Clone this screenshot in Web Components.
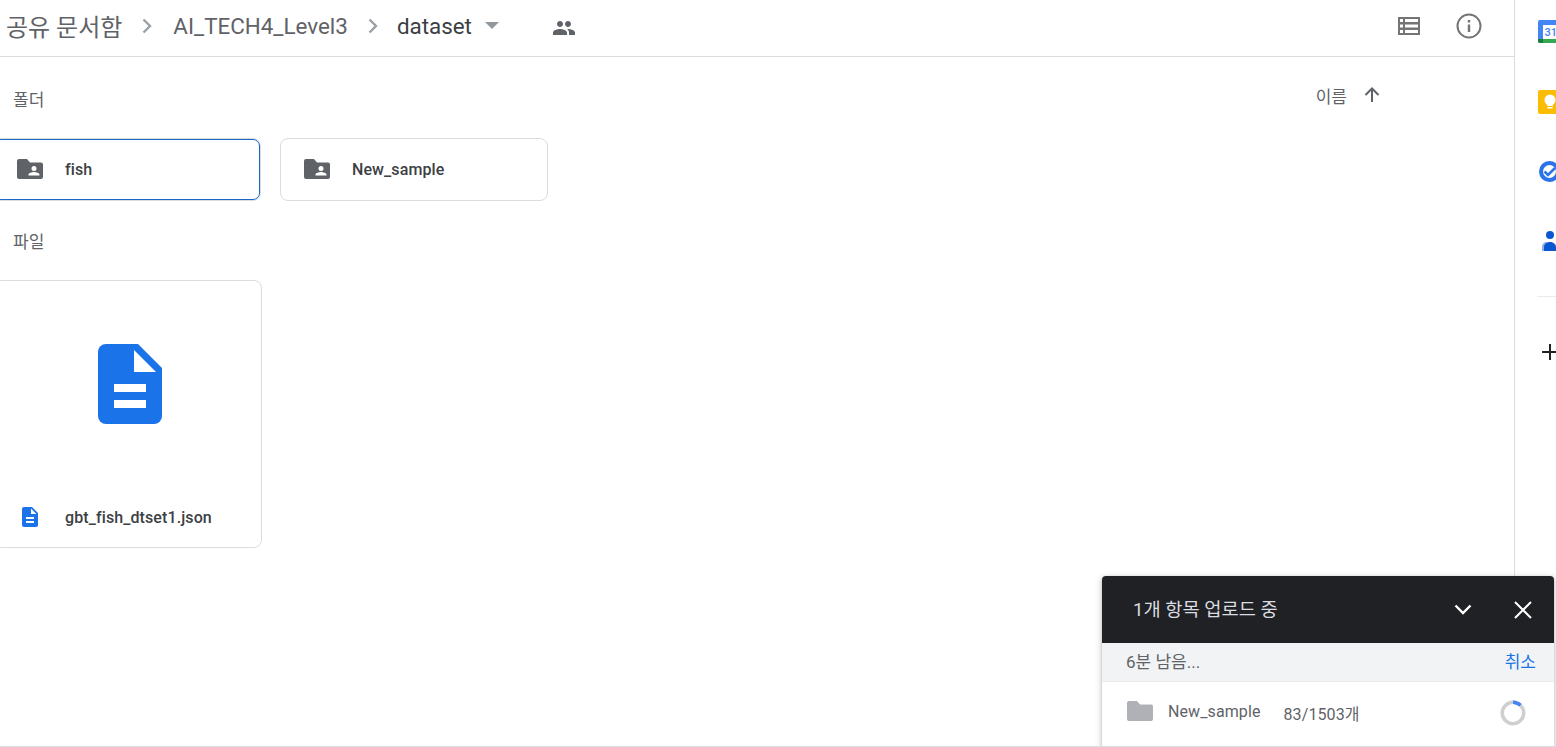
<!DOCTYPE html>
<html lang="ko">
<head>
<meta charset="utf-8">
<title>dataset - Google Drive</title>
<style>
    html, body {
        margin: 0;
        height: 100%;
        overflow: hidden;
        background: #fff;
        font-family: Roboto, "Noto Sans CJK KR", sans-serif;
    }
</style>
</head>
<body>
<drive-app>
    <drive-header></drive-header>
    <drive-section label="폴더" sortable>
        <folder-card name="fish" focused></folder-card>
        <folder-card name="New_sample"></folder-card>
    </drive-section>
    <drive-section label="파일">
        <file-card name="gbt_fish_dtset1.json"></file-card>
    </drive-section>
    <side-rail slot="rail"></side-rail>
    <upload-panel slot="overlay"></upload-panel>
</drive-app>

<script>
const define = (name, html) => {
    const template = document.createElement('template')
    template.innerHTML = html

    window.customElements.define(name, class extends HTMLElement {
        constructor() {
            super()

            this
                .attachShadow({ mode: 'open' })
                .appendChild(template.content.cloneNode(true))
        }

        connectedCallback() {
            this.shadowRoot.querySelectorAll('[data-attr]').forEach(el => {
                el.textContent = this.getAttribute(el.dataset.attr)
            })
        }
    })
}

const docIcon = size => `
    <svg width="${size * 64 / 80}" height="${size}" viewBox="0 0 64 80">
        <path fill="#1a73e8" d="M8 0H40L64 24V72a8 8 0 0 1-8 8H8a8 8 0 0 1-8-8V8a8 8 0 0 1 8-8Z"/>
        <path fill="#fff" d="M36 6V28H58ZM16 40H48V48H16ZM16 56H48V64H16Z"/>
    </svg>
`

define('drive-app', `
    <style>
        :host {
            display: grid;
            grid-template-columns: 1514px 42px;
            height: 746px;
            border-bottom: 1px solid #dadce0;
            position: relative;
            overflow: hidden;
        }

        main {
            min-width: 0;
        }
    </style>
    <main><slot></slot></main>
    <slot name="rail"></slot>
    <slot name="overlay"></slot>
`)

define('drive-header', `
    <style>
        :host {
            display: flex;
            align-items: center;
            box-sizing: content-box;
            height: 51px;
            padding: 0 0 5px 7px;
            border-bottom: 1px solid #dadce0;
            font-size: 22.4px;
            color: #5f6368;
        }

        .ko {
            font-size: 24px;
            margin-left: -1px;
        }

        .chevron {
            margin: 0 21px 0 20px;
        }

        .chevron.last {
            margin: 0 19px 0 20px;
        }

        .current {
            color: #3c4043;
        }

        .caret {
            margin-left: 13px;
            opacity: .85;
        }

        .people {
            margin: 5px 0 0 53px;
        }

        .list {
            margin-left: auto;
        }

        .info {
            margin: 0 32px 0 35px;
        }

        svg {
            display: block;
            flex: none;
        }
    </style>
    <span class="ko">공유 문서함</span>
    <svg class="chevron" width="10" height="16" viewBox="0 0 10 16"><path fill="none" stroke="#9aa0a6" stroke-width="2.4" d="M1.5 1.5 8 8l-6.500 6.500"/></svg>
    <span>AI_TECH4_Level3</span>
    <svg class="chevron last" width="10" height="16" viewBox="0 0 10 16"><path fill="none" stroke="#9aa0a6" stroke-width="2.4" d="M1.5 1.5 8 8l-6.500 6.500"/></svg>
    <span class="current">dataset</span>
    <svg class="caret" width="14" height="7" viewBox="0 0 14 7"><path fill="#80868b" d="M0 0H14L7 7Z"/></svg>
    <svg class="people" width="24" height="24" viewBox="0 0 24 24"><path fill="#5f6368" d="M16 11c1.660 0 2.990-1.340 2.990-3S17.660 5 16 5c-1.660 0-3 1.340-3 3s1.340 3 3 3zm-8 0c1.660 0 2.990-1.340 2.990-3S9.660 5 8 5C6.340 5 5 6.340 5 8s1.340 3 3 3zm0 2c-2.330 0-7 1.170-7 3.500V19h14v-2.500c0-2.330-4.670-3.500-7-3.500zm8 0c-.290 0-.620.020-.970.050 1.160.840 1.970 1.970 1.970 3.450V19h6v-2.500c0-2.330-4.670-3.500-7-3.500z"/></svg>
    <svg class="list" width="24" height="18" viewBox="0 0 24 18"><path fill="#757575" fill-rule="evenodd" d="M1 0H23V18H1ZM3 2V5H6V2ZM8 2V5H21V2ZM3 7.500V10.500H6V7.500ZM8 7.500V10.500H21V7.500ZM3 13V16H6V13ZM8 13V16H21V13Z"/></svg>
    <svg class="info" width="26" height="26" viewBox="0 0 26 26">
        <circle cx="13" cy="13" r="11.500" fill="none" stroke="#757575" stroke-width="2"/>
        <path fill="#757575" d="M11.800 11.500h2.400V19h-2.400zM11.800 7h2.400v2.400h-2.400z"/>
    </svg>
`)

define('drive-section', `
    <style>
        :host {
            display: block;
            margin-left: -7px;
        }

        header {
            display: flex;
            justify-content: space-between;
            align-items: center;
            height: 20px;
            padding: 31px 133px 30px 20px;
            font-size: 17px;
            color: #5f6368;
        }

        :host(:not([sortable])) header {
            padding: 29px 133px 30px 20px;
        }

        :host(:not([sortable])) .sort {
            display: none;
        }

        .sort {
            display: flex;
            align-items: center;
            gap: 16px;
            margin-top: -6px;
        }

        .items {
            display: flex;
            gap: 19px;
        }

        svg {
            display: block;
        }
    </style>
    <header>
        <span data-attr="label"></span>
        <span class="sort">
            <span>이름</span>
            <svg width="18" height="18" viewBox="0 0 18 18"><path fill="none" stroke="#5f6368" stroke-width="2" d="M9 16V2.500M2.500 9 9 2.500 15.500 9"/></svg>
        </span>
    </header>
    <div class="items"><slot></slot></div>
`)

define('folder-card', `
    <style>
        :host {
            display: block;
            box-sizing: border-box;
            width: 268px;
            height: 63px;
            border: 1px solid #dadce0;
            border-radius: 8px;
            font-size: 16px;
            letter-spacing: .1px;
            font-weight: 500;
            color: #3c4043;
        }

        .box {
            display: flex;
            align-items: center;
            box-sizing: border-box;
            height: 100%;
            padding: 0 0 2px 22px;
            border: 1px solid transparent;
            border-radius: 7px;
        }

        :host([focused]) .box {
            border-color: #1967c7;
        }

        span {
            margin-top: 2px;
        }

        svg {
            display: block;
            margin-right: 22px;
        }
    </style>
    <div class="box">
        <svg width="26" height="20" viewBox="0 0 26 20">
            <path fill="#5f6368" fill-rule="evenodd" d="M2 0H10L13 3.500H24a2 2 0 0 1 2 2V18a2 2 0 0 1-2 2H2a2 2 0 0 1-2-2V2a2 2 0 0 1 2-2ZM17 7a2.500 2.500 0 1 0 0 5 2.500 2.500 0 0 0 0-5ZM11.500 16.500H22.500V15.500C22.500 14 19 13 17 13S11.500 14 11.500 15.500Z"/>
        </svg>
        <span data-attr="name"></span>
    </div>
`)

define('file-card', `
    <style>
        :host {
            display: flex;
            flex-direction: column;
            box-sizing: border-box;
            width: 268px;
            height: 268px;
            margin-left: 1px;
            border: 1px solid #dadce0;
            border-radius: 8px;
            font-size: 16px;
            letter-spacing: .1px;
            font-weight: 500;
            color: #3c4043;
        }

        .preview {
            display: flex;
            justify-content: center;
            padding: 63px 0 0 4px;
            height: 163px;
        }

        .name {
            display: flex;
            align-items: center;
            gap: 27px;
            padding-left: 27px;
        }

        svg {
            display: block;
        }
    </style>
    <div class="preview">${docIcon(80)}</div>
    <div class="name">${docIcon(20)}<span data-attr="name"></span></div>
`)

define('side-rail', `
    <style>
        :host {
            display: flex;
            flex-direction: column;
            box-sizing: border-box;
            height: 746px;
            padding-top: 20px;
            border-left: 1px solid #dadce0;
            overflow: hidden;
        }

        svg {
            display: block;
            flex: none;
            margin-left: 23px;
        }

        svg + svg {
            margin-top: 46px;
        }

        hr {
            width: 60px;
            margin: 42px 0 46px 22px;
            border: 0;
            border-top: 1px solid #e8eaed;
        }
    </style>
    <svg width="24" height="24" viewBox="0 0 24 24">
        <path fill="#4285f4" d="M2 0H22a2 2 0 0 1 2 2V19H0V2a2 2 0 0 1 2-2Z"/>
        <rect x="5" y="5" width="19" height="14" fill="#fff"/>
        <path fill="#34a853" d="M0 19H24V23H2a2 2 0 0 1-2-2Z"/>
        <path fill="#188038" d="M0 19H5V23H2a2 2 0 0 1-2-2Z"/>
        <text x="6.500" y="16" font-family="Roboto, sans-serif" font-size="11" font-weight="500" fill="#4285f4">31</text>
    </svg>
    <svg width="24" height="24" viewBox="0 0 24 24">
        <rect width="24" height="24" rx="2" fill="#fbbc04"/>
        <circle cx="12" cy="10" r="5.500" fill="#fff"/>
        <rect x="9" y="14" width="6" height="2" fill="#fff"/>
        <rect x="9.500" y="17" width="5" height="1.500" fill="#fff"/>
    </svg>
    <svg width="24" height="24" viewBox="0 0 24 24">
        <circle cx="11.500" cy="11.500" r="8.500" fill="none" stroke="#2a73e8" stroke-width="4"/>
        <path fill="none" stroke="#2a73e8" stroke-width="2.500" d="M6.500 11.500 10 15l7-7"/>
    </svg>
    <svg width="24" height="24" viewBox="0 0 24 24">
        <circle cx="12" cy="5" r="4" fill="#0b57d0"/>
        <path fill="#8ab0ee" d="M4 21v-4c0-3 2-5 5-5v9Z"/>
        <path fill="#0b57d0" d="M6 21v-4c0-3 3-5 6-5s6 2 6 5v4Z"/>
    </svg>
    <hr>
    <svg style="margin: 0 0 0 26px" width="18" height="18" viewBox="0 0 18 18"><path fill="none" stroke="#202124" stroke-width="2" d="M9 1V17M1 9H17"/></svg>
`)

define('upload-panel', `
    <style>
        :host {
            display: block;
            position: absolute;
            left: 1102px;
            top: 576px;
            width: 452px;
            height: 171px;
            background: #fff;
            border-radius: 4px 4px 0 0;
            box-shadow: 0 1px 3px rgba(60, 64, 67, .3), 0 2px 6px 2px rgba(60, 64, 67, .15);
            overflow: hidden;
        }

        header {
            display: flex;
            align-items: center;
            height: 67px;
            padding-left: 31px;
            background: #202124;
            font-size: 18.7px;
            color: #dadce0;
        }

        header span {
            margin: -4px auto 0 0;
        }

        header svg:last-child {
            margin: 0 22px 0 42px;
        }

        .status {
            display: flex;
            justify-content: space-between;
            align-items: center;
            height: 38px;
            padding: 0 18px 0 24px;
            background: #f1f3f4;
            border-bottom: 1px solid #e8eaed;
            font-size: 17px;
            color: #5f6368;
        }

        .status span, .status a {
            margin-top: -3px;
        }

        .status a {
            color: #1a73e8;
        }

        .row {
            display: flex;
            align-items: center;
            height: 62px;
            padding-left: 25px;
            font-size: 16px;
            color: #5f6368;
        }

        .file {
            margin: -4px 23px 0 15px;
            letter-spacing: .1px;
        }

        .count {
            margin-top: -1px;
            letter-spacing: .1px;
        }

        .spinner {
            margin-left: auto;
            margin-right: 28px;
        }

        svg {
            display: block;
            flex: none;
        }
    </style>
    <header>
        <span>1개 항목 업로드 중</span>
        <svg width="18" height="11" viewBox="0 0 18 11"><path fill="none" stroke="#fff" stroke-width="2.400" d="M1.500 1.500 9 9l7.500-7.500"/></svg>
        <svg width="18" height="18" viewBox="0 0 18 18"><path fill="none" stroke="#fff" stroke-width="2" d="M1 1 17 17M17 1 1 17"/></svg>
    </header>
    <div class="status"><span>6분 남음...</span><a>취소</a></div>
    <div class="row">
        <svg width="26" height="20" viewBox="0 0 26 20" style="margin-top:-4px"><path fill="#b0b1b6" d="M2 0H10L13 3.500H24a2 2 0 0 1 2 2V18a2 2 0 0 1-2 2H2a2 2 0 0 1-2-2V2a2 2 0 0 1 2-2Z"/></svg>
        <span class="file">New_sample</span>
        <span class="count">83/1503개</span>
        <svg class="spinner" width="26" height="26" viewBox="0 0 26 26">
            <circle cx="13" cy="13" r="10.750" fill="none" stroke="#cfcfcf" stroke-width="3.500"/>
            <path fill="none" stroke="#4285f4" stroke-width="3.500" d="M13 2.250A10.750 10.750 0 0 1 20.500 5.300"/>
        </svg>
    </div>
`)
</script>
</body>
</html>
